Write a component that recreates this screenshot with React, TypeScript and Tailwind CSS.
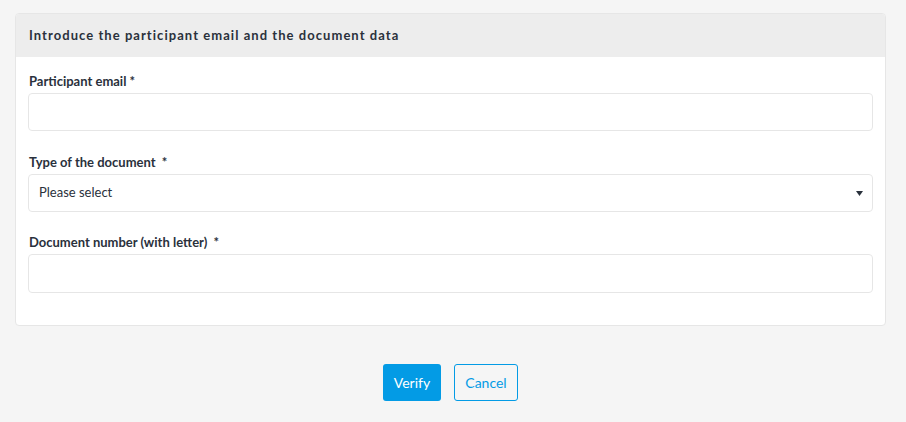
import React from 'react';

const fieldLabel = 'block text-[13px] leading-[18px] font-bold text-[#2a313c] mb-[3px]';
const fieldBox = 'w-full h-[38px] bg-white border border-[#e6e6e6] rounded-[4px]';

const App: React.FC = () => {
  return (
    <div className="min-h-[422px] bg-[#f5f5f5] pt-[13px] font-['Lato','Open_Sans',sans-serif]">
      <div className="ml-[15px] w-[871px]">
        <div className="bg-white border border-[#e6e6e6] rounded-[4px] overflow-hidden">
          <div className="h-[43px] bg-[#ededed] flex items-center px-[13px]">
            <h2 className="text-[13px] font-bold tracking-[1.05px] text-[#2a313c]">
              Introduce the participant email and the document data
            </h2>
          </div>

          <div className="px-[12px] pt-[15px] pb-[32px]">
            <div className="mb-[22px]">
              <label className={fieldLabel + ' pl-px'}>Participant email *</label>
              <input type="email" className={fieldBox} />
            </div>

            <div className="mb-[21px]">
              <label className={fieldLabel + ' pl-px'}>Type of the document&nbsp; *</label>
              <div className={fieldBox + ' flex items-center justify-between pl-[10px] pr-[9px]'}>
                <span className="text-[13px] text-[#2a313c]">Please select</span>
                <svg width="7" height="5" viewBox="0 0 7 5">
                  <polygon points="0,0 7,0 3.5,5" fill="#2a313c" />
                </svg>
              </div>
            </div>

            <div>
              <label className={fieldLabel + ' pl-px'}>Document number (with letter)&nbsp; *</label>
              <input type="text" className={fieldBox + ' h-[39px]'} />
            </div>
          </div>
        </div>

        <div className="flex justify-center gap-[13px] mt-[38px]">
          <button className="h-[37px] w-[58px] rounded-[3px] bg-[#039be5] text-white text-[14px]">
            Verify
          </button>
          <button className="h-[37px] w-[64px] rounded-[3px] border border-[#039be5] text-[#039be5] text-[14px] bg-transparent">
            Cancel
          </button>
        </div>
      </div>
    </div>
  );
};

export default App;
